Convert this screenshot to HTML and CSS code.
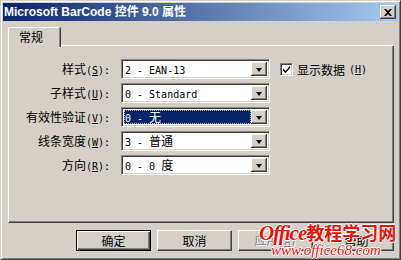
FILE: index.html
```html
<!DOCTYPE html>
<html lang="zh-CN">
<head>
  <meta charset="UTF-8">
  <title>Microsoft BarCode 控件 9.0 属性</title>
  <link rel="stylesheet" href="styles.css">
</head>
<body>
<div class="window">
  <!-- TITLE -->
  <div class="titlebar">
    <span class="title">Microsoft BarCode 控件 9.0 属性</span>
    <button class="close-btn">
      <svg width="8" height="7" viewBox="0 0 8 7"><path d="M0 0h2l2 2 2-2h2L5 3.5 8 7H6L4 5 2 7H0l3-3.5z" fill="#000"/></svg>
    </button>
  </div>

  <div class="content">
    <!-- TABS -->
    <div class="tabs">
      <div class="tab active">常规</div>
    </div>

    <!-- PANEL -->
    <div class="panel">
      <div class="form">
        <label class="lbl">样式<span class="a">(<u>S</u>):</span></label>
        <div class="combo"><div class="edit"><span class="a">2 - EAN-13</span></div><span class="drop"></span></div>
        <label class="check"><span class="box"><svg width="9" height="9" viewBox="0 0 9 9"><path d="M1 3.5l2.5 2.5L8 1v2L3.5 8 1 5.5z" fill="#000"/></svg></span>显示数据 <span class="a">(<u>H</u>)</span></label>

        <label class="lbl">子样式<span class="a">(<u>U</u>):</span></label>
        <div class="combo"><div class="edit"><span class="a">0 - Standard</span></div><span class="drop"></span></div>
        <span></span>

        <label class="lbl">有效性验证<span class="a">(<u>V</u>):</span></label>
        <div class="combo"><div class="edit sel"><span class="a">0 - </span>无</div><span class="drop"></span></div>
        <span></span>

        <label class="lbl">线条宽度<span class="a">(<u>W</u>):</span></label>
        <div class="combo"><div class="edit"><span class="a">3 - </span>普通</div><span class="drop"></span></div>
        <span></span>

        <label class="lbl">方向<span class="a">(<u>R</u>):</span></label>
        <div class="combo"><div class="edit"><span class="a">0 - 0 </span>度</div><span class="drop"></span></div>
        <span></span>
      </div>
    </div>

    <!-- BUTTONS -->
    <div class="buttons">
      <button class="btn default">确定</button>
      <button class="btn">取消</button>
      <button class="btn disabled">应用<span class="a">(<u>A</u>)</span></button>
      <button class="btn">帮助</button>
    </div>
  </div>

  <div class="watermark">
    <div class="wm1"><i>Office</i>教程学习网</div>
    <div class="wm2">www.office68.com</div>
  </div>
</div>
</body>
</html>
```

FILE: styles.css
```css
:root{
  --face:#d4d0c8;
  --shadow:#808080;
  --dark:#404040;
  --light:#ffffff;
  --navy:#0a246a;
  --cjk:"Noto Sans CJK SC","DejaVu Sans",sans-serif;
}
*{box-sizing:border-box;margin:0;padding:0}
body{background:var(--face);font-family:var(--cjk);font-size:12px;color:#000}
.window{
  position:relative;
  width:401px;height:260px;
  background:var(--face);
  border:1px solid;border-color:var(--face) var(--dark) var(--dark) var(--face);
  box-shadow:inset 1px 1px 0 var(--light),inset -1px -1px 0 var(--shadow);
  padding:2px;
  display:flex;flex-direction:column;
  overflow:hidden;
}
.a{font-family:"DejaVu Sans Mono",monospace;font-size:10px}
u{text-decoration:underline;text-underline-offset:1px}

/* title */
.titlebar{
  height:18px;flex:none;
  background:linear-gradient(to right,var(--navy),#a6caf0);
  display:flex;align-items:center;justify-content:space-between;
  padding:0 2px 0 1px;
}
.title{color:#fff;font-weight:bold;font-size:12px;line-height:16px;font-family:"Liberation Sans",var(--cjk);white-space:nowrap}
.close-btn{
  width:16px;height:14px;background:var(--face);
  border:none;
  box-shadow:inset -1px -1px 0 var(--dark),inset 1px 1px 0 var(--light),inset -2px -2px 0 var(--shadow);
  display:flex;align-items:center;justify-content:center;
}

/* body */
.content{flex:1;padding:6px 4px 0 5px;display:flex;flex-direction:column}
.tabs{display:flex;height:18px;flex:none;position:relative;z-index:1}
.tab{
  width:52px;height:20px;
  padding:2px 0 0 10px;
  background:var(--face);
  border-left:1px solid var(--light);border-top:1px solid var(--light);
  border-top-left-radius:2px;border-top-right-radius:2px;
  box-shadow:inset -1px 0 0 var(--shadow),1px 0 0 var(--dark);
  line-height:14px;
}
.panel{
  height:178px;flex:none;
  border:1px solid;border-color:var(--light) var(--dark) var(--dark) var(--light);
  box-shadow:inset -1px -1px 0 var(--shadow);
  padding:13px 0 0 1px;
}
.form{
  display:grid;
  grid-template-columns:100px 149px auto;
  grid-auto-rows:20px;
  column-gap:11px;row-gap:4px;
  align-items:center;
}
.lbl{text-align:right;height:20px;line-height:20px;white-space:nowrap}

/* combo */
.combo{
  height:20px;display:flex;
  background:#fff;
  border:1px solid;border-color:var(--shadow) var(--light) var(--light) var(--shadow);
  box-shadow:inset 1px 1px 0 var(--dark),inset -1px -1px 0 var(--face);
  padding:2px;
}
.edit{flex:1;height:14px;line-height:14px;padding-left:1px;white-space:nowrap}
.edit.sel{background:var(--navy);color:#fff;outline:1px dotted #c8c8c8;outline-offset:-1px}
.drop{
  width:16px;background:var(--face);
  box-shadow:inset -1px -1px 0 var(--dark),inset 1px 1px 0 var(--light),inset -2px -2px 0 var(--shadow);
  display:flex;align-items:center;justify-content:center;
}
.drop::after{content:"";border:4px solid transparent;border-top:4px solid #000;border-bottom:0;width:0;height:0;margin-top:1px;border-left-width:3.5px;border-right-width:3.5px}

/* checkbox */
.check{display:flex;align-items:center;gap:4px;height:20px;white-space:nowrap;margin-left:-1px}
.box{
  width:13px;height:13px;background:#fff;
  border:1px solid;border-color:var(--shadow) var(--light) var(--light) var(--shadow);
  box-shadow:inset 1px 1px 0 var(--dark),inset -1px -1px 0 var(--face);
  display:flex;align-items:center;justify-content:center;
}

/* buttons */
.buttons{display:flex;justify-content:flex-end;gap:6px;margin-top:7px}
.btn{
  width:75px;height:21px;background:var(--face);
  font-family:var(--cjk);font-size:12px;line-height:14px;color:#000;
  border:1px solid;border-color:var(--light) var(--dark) var(--dark) var(--light);
  box-shadow:inset -1px -1px 0 var(--shadow);
}
.btn.default{border:1px solid #000;box-shadow:inset 1px 1px 0 var(--light),inset -1px -1px 0 var(--dark),inset -2px -2px 0 var(--shadow)}
.btn.disabled{color:var(--shadow);text-shadow:1px 1px 0 var(--light)}

/* watermark */
.watermark{position:absolute;left:258px;top:222px;color:#e8120c;font-weight:bold;
  text-shadow:1px 0 0 #fff,-1px 0 0 #fff,0 1px 0 #fff,0 -1px 0 #fff}
.wm1{font-size:18px;line-height:19px;font-family:var(--cjk);white-space:nowrap}
.wm1 i{font-family:"Liberation Serif",serif;font-size:21px;letter-spacing:-1px}
.wm2{font-family:"Liberation Serif",serif;font-style:italic;font-size:15px;line-height:15px;margin-left:12px;font-weight:normal}
```
